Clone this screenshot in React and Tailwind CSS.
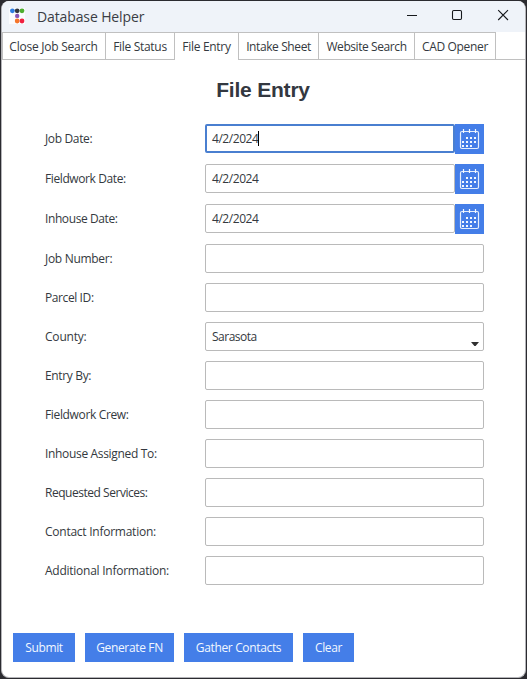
import React from "react";

const UI = "font-['Open_Sans','Noto_Sans',sans-serif]";

const tabs = [
  { label: "Close Job Search", box: "w-[104px] border-l border-b", text: "tracking-[-0.25px] -ml-px" },
  { label: "File Status", box: "w-[69px] border-b", text: "tracking-[-0.3px]" },
  { label: "File Entry", box: "w-[64px]", text: "tracking-[-0.3px]" },
  { label: "Intake Sheet", box: "w-[80px] border-b", text: "tracking-[-0.4px]" },
  { label: "Website Search", box: "w-[96px] border-b", text: "tracking-[-0.42px]" },
  { label: "CAD Opener", box: "w-[81px] border-b", text: "tracking-[-0.35px]" },
];

const rows = [
  { label: "Job Date:", kind: "date", focused: true, text: "tracking-[-0.35px]" },
  { label: "Fieldwork Date:", kind: "date", text: "tracking-[-0.4px]" },
  { label: "Inhouse Date:", kind: "date", text: "tracking-[-0.4px]" },
  { label: "Job Number:", text: "tracking-[-0.3px]" },
  { label: "Parcel ID:", text: "tracking-[-0.4px]" },
  { label: "County:", kind: "select", text: "tracking-[-0.2px]" },
  { label: "Entry By:", text: "tracking-[-0.35px]" },
  { label: "Fieldwork Crew:", text: "tracking-[-0.35px]" },
  { label: "Inhouse Assigned To:", text: "tracking-[-0.33px]" },
  { label: "Requested Services:", text: "tracking-[-0.47px]" },
  { label: "Contact Information:", text: "tracking-[-0.25px]" },
  { label: "Additional Information:", text: "tracking-[-0.25px]" },
];

const actions = [
  { label: "Submit", width: "w-[62px]" },
  { label: "Generate FN", width: "w-[89px]" },
  { label: "Gather Contacts", width: "w-[109px]" },
  { label: "Clear", width: "w-[51px]" },
];

function AppLogo() {
  return (
    <svg width="16" height="16" viewBox="0 0 16 16" className="mb-px shrink-0">
      <rect width="16" height="16" fill="#fbfcfe" />
      <circle cx="3.4" cy="2.8" r="2.4" fill="#2f7de0" />
      <circle cx="8.2" cy="2.8" r="2.4" fill="#33363d" />
      <circle cx="13" cy="2.8" r="2.4" fill="#4fae2f" />
      <circle cx="8.2" cy="7.9" r="2.2" fill="#8a55b5" />
      <circle cx="8.2" cy="13" r="2.4" fill="#f5762b" />
      <circle cx="13" cy="13" r="2.4" fill="#f0203f" />
    </svg>
  );
}

function CalendarIcon() {
  const dots = [
    [12, 13], [16, 13], [20, 13],
    [8, 17], [12, 17], [16, 17], [20, 17],
    [8, 21], [12, 21], [16, 21],
  ];
  return (
    <svg width="29" height="30" viewBox="0 0 29 30" fill="none">
      <rect x="5.5" y="7.5" width="18" height="17" rx="1.5" stroke="#e4eefc" strokeWidth="1.2" />
      <path d="M8.5 5v4M14.5 5v4M20.5 5v4" stroke="#f4f9ff" strokeWidth="1.2" />
      {dots.map(([x, y]) => (
        <rect key={`${x}-${y}`} x={x - 1} y={y} width="2" height="2" fill="#f2f8ff" />
      ))}
    </svg>
  );
}

function Field({ kind, focused }) {
  if (kind === "date") {
    return (
      <div className="flex h-[30px] w-[279px]">
        <div
          className={
            focused
              ? "flex h-[29px] w-[250px] items-center rounded-[2px] border-2 border-[#4a7fd0] pl-[5px]"
              : "flex h-[29px] w-[250px] items-center rounded-[2px] border border-[#bababa] pl-[6px]"
          }
        >
          <span className="tracking-[-0.45px]">4/2/2024</span>
          {focused && <span className="h-[15px] w-px bg-black" />}
        </div>
        <button className="h-[30px] w-[29px] bg-[#447ee8]">
          <CalendarIcon />
        </button>
      </div>
    );
  }
  return (
    <div className="flex h-[29px] w-[279px] items-center justify-between rounded-[2px] border border-[#bababa] pl-[6px] pr-1">
      {kind === "select" && (
        <>
          <span className="tracking-[-0.5px]">Sarasota</span>
          <svg width="8" height="4" viewBox="0 0 8 4" className="mt-[14px]">
            <path d="M0 0h8L4.6 4H3.4z" fill="#303030" />
          </svg>
        </>
      )}
    </div>
  );
}

export default function App() {
  return (
    <div className={`h-[679px] w-[527px] bg-[#2b2b30] pb-px pl-px pr-px pt-px text-[12px] text-[#343940] ${UI}`}>
      <div className="flex h-[677px] w-[525px] flex-col overflow-hidden rounded-[8px] border-b border-l border-r border-[#b4b4b8] bg-white">
        <header className="flex h-[31px] shrink-0 items-center bg-[#eff3f9] pl-[7px]">
          <AppLogo />
          <h1 className="ml-3 text-[14px] tracking-[-0.12px] text-[#3a3d44]">Database Helper</h1>
          <svg
            width="122"
            height="31"
            viewBox="0 0 122 31"
            fill="none"
            stroke="currentColor"
            className="ml-auto text-[#16181c]"
          >
            <path d="M4 14.5h10" />
            <rect x="49.5" y="9.5" width="9" height="9" rx="1.2" strokeWidth="1.1" />
            <path d="M95.2 9.2l9.8 9.8M105 9.2l-9.8 9.8" strokeWidth="1.1" />
          </svg>
        </header>

        <nav className="flex h-[28px] shrink-0">
          {tabs.map((t) => (
            <div
              key={t.label}
              className={`flex shrink-0 items-center justify-center whitespace-nowrap border-r border-t border-[#c0c0c0] pt-px ${t.box}`}
            >
              <span className={t.text}>{t.label}</span>
            </div>
          ))}
          <div className="flex-1 border-b border-[#c0c0c0]" />
        </nav>

        <main className="flex flex-1 flex-col">
          <h2 className="mt-[14px] h-[32px] pr-px text-center font-['Liberation_Sans',Arial,sans-serif] text-[21px] font-bold leading-[32px] tracking-[-0.2px] text-[#333840]">
            File Entry
          </h2>
          <div className="mt-[18px] flex flex-col gap-[10px] pl-[43px]">
            {rows.map((r) => (
              <div key={r.label} className="flex">
                <label className={`flex h-[29px] w-[160px] items-center whitespace-nowrap pt-px ${r.text}`}>
                  {r.label}
                </label>
                <Field kind={r.kind} focused={r.focused} />
              </div>
            ))}
          </div>
          <div className="mt-[48px] flex gap-[10px] pl-[11px]">
            {actions.map((a) => (
              <button
                key={a.label}
                className={`h-[29px] whitespace-nowrap bg-[#447ee8] pt-px tracking-[-0.35px] text-[#f2f8ff] ${a.width}`}
              >
                {a.label}
              </button>
            ))}
          </div>
        </main>
      </div>
    </div>
  );
}
